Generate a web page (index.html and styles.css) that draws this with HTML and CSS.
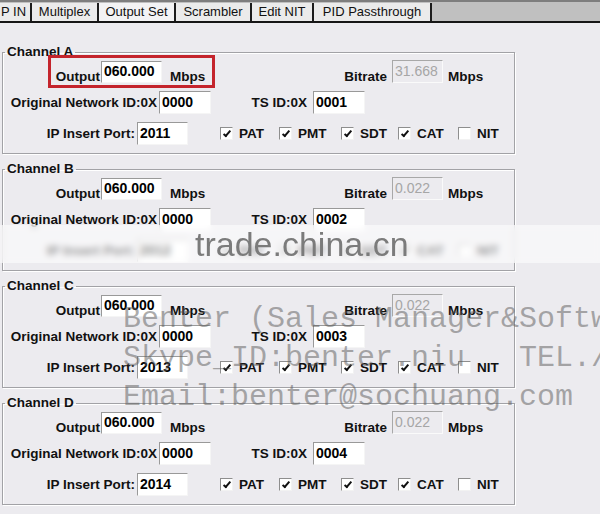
FILE: index.html
```html
<!DOCTYPE html>
<html lang="en">
<head>
<meta charset="UTF-8">
<meta name="viewport" content="width=device-width, initial-scale=1.0">
<title>Output Set</title>
<link rel="stylesheet" href="styles.css">
</head>
<body>

<div class="tabs">
    <div class="tab tab-ipin">P IN</div>
    <div class="tab tab-mux">Multiplex</div>
    <div class="tab tab-out active">Output Set</div>
    <div class="tab tab-scr">Scrambler</div>
    <div class="tab tab-nit">Edit NIT</div>
    <div class="tab tab-pid">PID Passthrough</div>
</div>

<div class="page">
    <!-- Channel A -->
    <fieldset class="channel">
        <legend>Channel A</legend>
        <div class="row row-rate">
            <span class="lbl lbl-output">Output</span>
            <input class="field field-output" value="060.000">
            <span class="unit">Mbps</span>
            <span class="lbl lbl-bitrate">Bitrate</span>
            <input class="field field-bitrate" value="31.668" disabled>
            <span class="unit unit-bitrate">Mbps</span>
        </div>
        <div class="row">
            <span class="lbl lbl-onid">Original Network ID:0X</span>
            <input class="field field-id" value="0000">
            <span class="lbl lbl-tsid">TS ID:0X</span>
            <input class="field field-id field-tsid" value="0001">
        </div>
        <div class="row">
            <span class="lbl lbl-port">IP Insert Port:</span>
            <input class="field field-port" value="2011">
            <div class="checks">
                <label class="chk chk-pat"><span class="box on"></span>PAT</label>
                <label class="chk chk-pmt"><span class="box on"></span>PMT</label>
                <label class="chk chk-sdt"><span class="box on"></span>SDT</label>
                <label class="chk chk-cat"><span class="box on"></span>CAT</label>
                <label class="chk"><span class="box"></span>NIT</label>
            </div>
        </div>
    </fieldset>

    <!-- Channel B -->
    <fieldset class="channel">
        <legend>Channel B</legend>
        <div class="row row-rate">
            <span class="lbl lbl-output">Output</span>
            <input class="field field-output" value="060.000">
            <span class="unit">Mbps</span>
            <span class="lbl lbl-bitrate">Bitrate</span>
            <input class="field field-bitrate" value="0.022" disabled>
            <span class="unit unit-bitrate">Mbps</span>
        </div>
        <div class="row">
            <span class="lbl lbl-onid">Original Network ID:0X</span>
            <input class="field field-id" value="0000">
            <span class="lbl lbl-tsid">TS ID:0X</span>
            <input class="field field-id field-tsid" value="0002">
        </div>
        <div class="row">
            <span class="lbl lbl-port">IP Insert Port:</span>
            <input class="field field-port" value="2012">
            <div class="checks">
                <label class="chk chk-pat"><span class="box on"></span>PAT</label>
                <label class="chk chk-pmt"><span class="box on"></span>PMT</label>
                <label class="chk chk-sdt"><span class="box on"></span>SDT</label>
                <label class="chk chk-cat"><span class="box on"></span>CAT</label>
                <label class="chk"><span class="box"></span>NIT</label>
            </div>
        </div>
    </fieldset>

    <!-- Channel C -->
    <fieldset class="channel">
        <legend>Channel C</legend>
        <div class="row row-rate">
            <span class="lbl lbl-output">Output</span>
            <input class="field field-output" value="060.000">
            <span class="unit">Mbps</span>
            <span class="lbl lbl-bitrate">Bitrate</span>
            <input class="field field-bitrate" value="0.022" disabled>
            <span class="unit unit-bitrate">Mbps</span>
        </div>
        <div class="row">
            <span class="lbl lbl-onid">Original Network ID:0X</span>
            <input class="field field-id" value="0000">
            <span class="lbl lbl-tsid">TS ID:0X</span>
            <input class="field field-id field-tsid" value="0003">
        </div>
        <div class="row">
            <span class="lbl lbl-port">IP Insert Port:</span>
            <input class="field field-port" value="2013">
            <div class="checks">
                <label class="chk chk-pat"><span class="box on"></span>PAT</label>
                <label class="chk chk-pmt"><span class="box on"></span>PMT</label>
                <label class="chk chk-sdt"><span class="box on"></span>SDT</label>
                <label class="chk chk-cat"><span class="box on"></span>CAT</label>
                <label class="chk"><span class="box"></span>NIT</label>
            </div>
        </div>
    </fieldset>

    <!-- Channel D -->
    <fieldset class="channel">
        <legend>Channel D</legend>
        <div class="row row-rate">
            <span class="lbl lbl-output">Output</span>
            <input class="field field-output" value="060.000">
            <span class="unit">Mbps</span>
            <span class="lbl lbl-bitrate">Bitrate</span>
            <input class="field field-bitrate" value="0.022" disabled>
            <span class="unit unit-bitrate">Mbps</span>
        </div>
        <div class="row">
            <span class="lbl lbl-onid">Original Network ID:0X</span>
            <input class="field field-id" value="0000">
            <span class="lbl lbl-tsid">TS ID:0X</span>
            <input class="field field-id field-tsid" value="0004">
        </div>
        <div class="row">
            <span class="lbl lbl-port">IP Insert Port:</span>
            <input class="field field-port" value="2014">
            <div class="checks">
                <label class="chk chk-pat"><span class="box on"></span>PAT</label>
                <label class="chk chk-pmt"><span class="box on"></span>PMT</label>
                <label class="chk chk-sdt"><span class="box on"></span>SDT</label>
                <label class="chk chk-cat"><span class="box on"></span>CAT</label>
                <label class="chk"><span class="box"></span>NIT</label>
            </div>
        </div>
    </fieldset>
</div>

<!-- red highlight round the first output field -->
<div class="highlight"></div>

<!-- watermarks -->
<div class="wm-band"><span>trade.china.cn</span></div>
<div class="wm-text">Benter (Sales Manager&amp;Softw<br>Skype_ID:benter.niu   TEL./W<br>Email:benter@sochuang.com</div>

</body>
</html>
```

FILE: styles.css
```css
body {
    margin: 0;
    width: 600px;
    height: 514px;
    overflow: hidden;
    position: relative;
    background-color: #ecebef;
    font-family: "Liberation Sans", Arial, sans-serif;
    color: #111;
}

/* Tab strip */
.tabs {
    display: flex;
    height: 18px;
    padding-top: 1px;
    border-top: 2px solid #7e7e7e;
    border-bottom: 2px solid #161616;
    background-color: #c0c0c0;
}
.tab {
    flex: none;
    box-sizing: border-box;
    height: 100%;
    line-height: 18px;
    text-align: center;
    font-size: 13px;
    white-space: nowrap;
    background-color: #ebebeb;
    border-right: 2px solid #1c1c1c;
}
.tab.active {
    background-color: #f3f3f4;
}
.tab-ipin { width: 32px; text-align: left; padding-left: 1px; }
.tab-mux { width: 67px; }
.tab-out { width: 77px; }
.tab-scr { width: 76px; }
.tab-nit { width: 62px; }
.tab-pid { width: 118px; }

/* Channel groups */
.page {
    display: flex;
    flex-direction: column;
    gap: 7px;
    padding: 21px 0 0 2px;
}
.channel {
    display: flex;
    flex-direction: column;
    gap: 8px;
    width: 513px;
    box-sizing: border-box;
    margin: 0;
    padding: 0 0 8px 0;
    border: 1px solid #a2a2a6;
    box-shadow: 1px 1px 0 #fff, inset 1px 1px 0 #fff;
}
.channel legend {
    margin-left: 2px;
    padding: 0 2px;
    font-size: 13.5px;
    font-weight: bold;
    line-height: 16px;
}

.row {
    display: flex;
    align-items: center;
    height: 23px;
    font-size: 13.5px;
    font-weight: bold;
    white-space: nowrap;
}
.row-rate {
    height: 22px;
    margin-top: 1px;
    align-items: flex-end;
}
.row-rate .lbl,
.row-rate .unit {
    line-height: 12px;
}

.lbl {
    flex: none;
    text-align: right;
}
.lbl-output { width: 97px; }
.lbl-bitrate { width: 177px; }
.lbl-onid { width: 154px; }
.lbl-tsid { width: 96px; }
.lbl-port { width: 132px; }

.unit {
    flex: none;
    width: 40px;
    margin-left: 8px;
}
.unit.unit-bitrate {
    margin-left: 5px;
}

/* Edit boxes */
.field {
    flex: none;
    box-sizing: border-box;
    height: 23px;
    margin: 0;
    padding: 0 0 2px 2px;
    border: 1px solid;
    border-color: #999 #f5f5f5 #f5f5f5 #999;
    background-color: #fff;
    color: #000;
    font-family: "Liberation Sans", Arial, sans-serif;
    font-size: 14px;
    font-weight: bold;
    outline: none;
}
.field-output { width: 61px; height: 22px; margin-left: 1px; }
.field-bitrate {
    width: 51px;
    margin-left: 5px;
    background-color: #ecebef;
    color: #a6a6a6;
    font-weight: normal;
    border-color: #a8a8a8 #fafafa #fafafa #a8a8a8;
}
.field-id { width: 52px; margin-left: 2px; }
.field-id.field-tsid { margin-left: 6px; }
.field-port { width: 51px; margin-left: 2px; }

/* Check boxes */
.checks {
    display: flex;
    align-items: center;
    margin-left: 32px;
}
.chk {
    display: flex;
    align-items: center;
}
.chk-pat { width: 59px; }
.chk-pmt { width: 62px; }
.chk-sdt { width: 57px; }
.chk-cat { width: 60px; }
.box {
    position: relative;
    width: 13px;
    height: 13px;
    box-sizing: border-box;
    margin-right: 6px;
    border: 1px solid;
    border-color: #8e8e8e #f2f2f2 #f2f2f2 #8e8e8e;
    background-color: #fff;
}
.box.on::after {
    content: '';
    position: absolute;
    left: 4px;
    top: 1px;
    width: 2px;
    height: 6px;
    border-right: 2px solid #111;
    border-bottom: 2px solid #111;
    transform: rotate(40deg);
}

/* Red frame drawn over the screenshot */
.highlight {
    position: absolute;
    left: 48px;
    top: 55px;
    width: 167px;
    height: 33px;
    box-sizing: border-box;
    border: 3px solid #c4242c;
}

/* Watermarks */
.wm-band {
    position: absolute;
    left: 0;
    top: 225px;
    width: 600px;
    height: 38px;
    padding-left: 195px;
    box-sizing: border-box;
    background-color: rgba(255, 255, 255, 0.55);
    backdrop-filter: blur(3px);
    font-family: "Liberation Sans", Arial, sans-serif;
    font-size: 34px;
    line-height: 38px;
    color: #7b7b7b;
}
.wm-text {
    position: absolute;
    left: 123px;
    top: 300px;
    width: 477px;
    overflow: hidden;
    font-family: "Liberation Mono", "Courier New", monospace;
    font-size: 30px;
    line-height: 39px;
    white-space: pre;
    color: rgba(90, 90, 90, 0.5);
}
```
